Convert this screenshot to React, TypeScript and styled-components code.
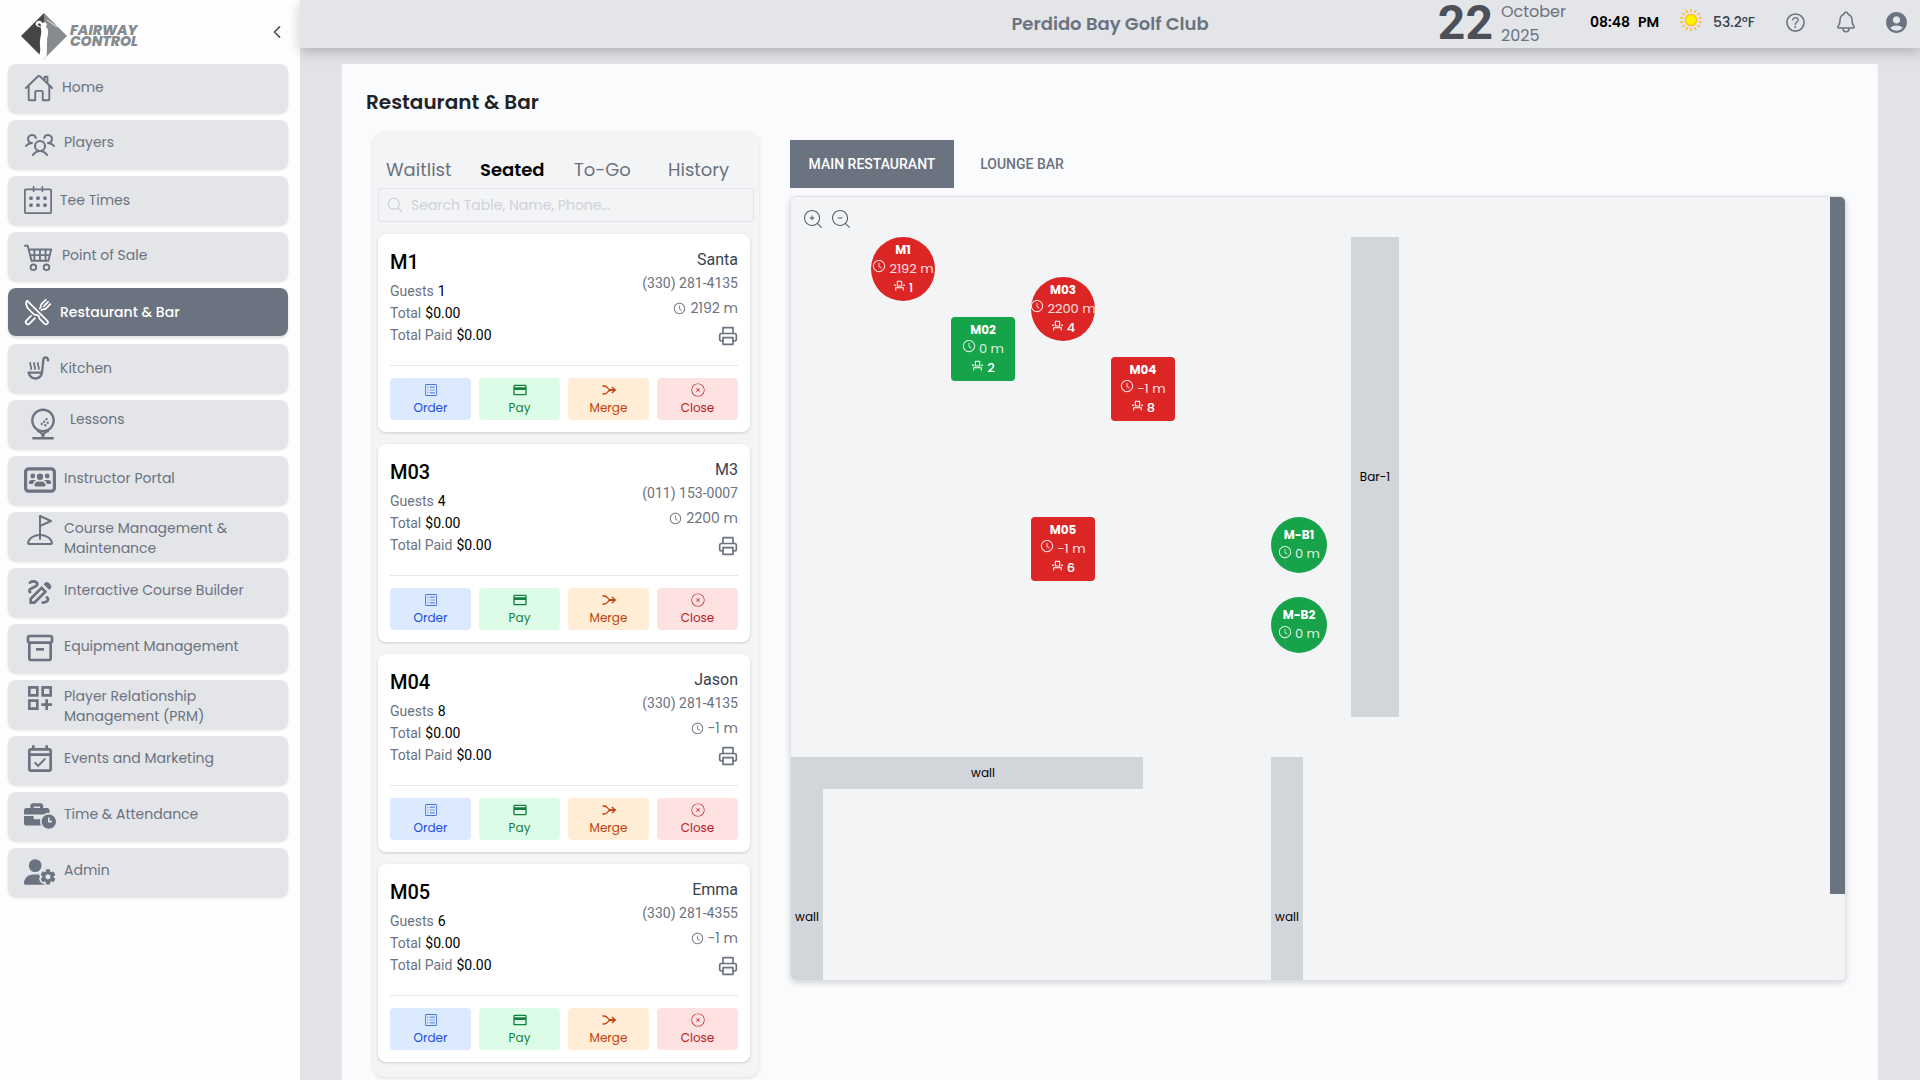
import React from "react";
import styled, { createGlobalStyle } from "styled-components";
import type { IconType } from "react-icons";
import {
  IoChevronBack,
  IoGolfOutline,
  IoHelpCircleOutline,
  IoHomeOutline,
  IoNotificationsOutline,
  IoRestaurantOutline,
  IoSearchOutline,
} from "react-icons/io5";
import { PiUsersThree } from "react-icons/pi";
import { SlCalender } from "react-icons/sl";
import { BsCart4 } from "react-icons/bs";
import {
  MdAccountCircle,
  MdOutlineDashboardCustomize,
  MdOutlineDraw,
  MdOutlineEventAvailable,
  MdOutlineEventSeat,
  MdOutlineInventory2,
  MdOutlineSoupKitchen,
  MdPayment,
} from "react-icons/md";
import { LiaGolfBallSolid } from "react-icons/lia";
import { FaUserGear, FaUsersRectangle } from "react-icons/fa6";
import { FaBusinessTime } from "react-icons/fa";
import { AiOutlineClockCircle } from "react-icons/ai";
import { CiCircleRemove, CiViewList, CiZoomIn, CiZoomOut } from "react-icons/ci";
import { FiPrinter } from "react-icons/fi";
import { TbArrowMerge } from "react-icons/tb";

const sans = `Poppins, Inter, "Open Sans", sans-serif`;
const roboto = `Roboto, "Open Sans", sans-serif`;
const slate = "#6b7280";

const GlobalStyle = createGlobalStyle`
  *, *::before, *::after { box-sizing: border-box; }
  body { margin: 0; font-family: ${sans}; background: #fff; color: #000; }
  button, input { font: inherit; }
  button { border: 0; padding: 0; background: none; color: inherit; cursor: pointer; }
  h1, h2, p, ul, dl, dd { margin: 0; padding: 0; }
  svg { display: block; flex-shrink: 0; }
`;

const Shell = styled.div`
  display: grid;
  grid-template-columns: 300px minmax(0, 1fr);
  height: 100vh;
  overflow: hidden;
`;

/* ---------- sidebar ---------- */

const Sidebar = styled.aside`
  background: #fefefe;
  padding: 0 12px 0 8px;
`;

const Brand = styled.div`
  display: flex;
  align-items: center;
  justify-content: space-between;
  height: 64px;
  padding: 8px 2px 0 12px;
`;

const Logo = styled.a`
  display: flex;
  align-items: center;
  gap: 2px;
  color: #868b8f;
  text-decoration: none;
`;

const LogoText = styled.span`
  display: flex;
  flex-direction: column;
  font-size: 14px;
  font-style: italic;
  font-weight: 800;
  line-height: 11px;
`;

const Collapse = styled.button`
  display: flex;
  color: #4b5563;
  padding: 0 0 8px;
`;

const NavList = styled.ul`
  display: flex;
  flex-direction: column;
  gap: 8px;
  list-style: none;
`;

const NavLink = styled.a<{ $active: boolean }>`
  display: flex;
  align-items: center;
  height: 48px;
  padding: 0 16px;
  border-radius: 8px;
  background: ${(p) => (p.$active ? slate : "#e4e5e9")};
  color: ${(p) => (p.$active ? "#fff" : slate)};
  font-weight: ${(p) => (p.$active ? 500 : 400)};
  box-shadow: 0 2px 3px rgba(0, 0, 0, 0.12);
  text-decoration: none;
`;

const NavRow = styled.span`
  display: flex;
  align-items: flex-start;
  gap: 8px;
`;

const NavText = styled.span`
  min-height: 28px;
  max-width: 190px;
  padding-top: 4px;
  font-size: 14px;
  line-height: 20px;
`;

/* ---------- header ---------- */

const Content = styled.div`
  display: flex;
  flex-direction: column;
  min-width: 0;
  background: #e2e3e7;
`;

const Header = styled.header`
  display: grid;
  grid-template-columns: 1fr auto 1fr;
  align-items: center;
  height: 48px;
  flex-shrink: 0;
  background: #e4e5e9;
  box-shadow: 0 4px 12px rgba(0, 0, 0, 0.22);
`;

const Club = styled.p`
  grid-column: 2;
  font-size: 18px;
  line-height: 28px;
  font-weight: 600;
  color: ${slate};
`;

const Status = styled.div`
  display: flex;
  align-items: flex-start;
  justify-content: flex-end;
  height: 48px;
  padding-right: 11px;
`;

const DateBox = styled.time`
  display: flex;
  gap: 8px;
  color: ${slate};
`;

const Day = styled.span`
  font-family: ${roboto};
  font-size: 48px;
  line-height: 46px;
  font-weight: 700;
  color: #4b5058;
`;

const Month = styled.span`
  display: flex;
  flex-direction: column;
  font-size: 16px;
  line-height: 24px;
`;

const Clock = styled.time`
  display: flex;
  gap: 8px;
  margin-left: 24px;
  font-size: 14px;
  line-height: 44px;
  font-weight: 600;
`;

const Weather = styled.span`
  display: flex;
  align-items: center;
  gap: 10px;
  height: 44px;
  margin: 0 28px 0 20px;
  font-size: 14px;
  font-weight: 500;
  color: #374151;
`;

const HeaderButtons = styled.div`
  display: flex;
  gap: 26px;
  height: 44px;
  color: ${slate};
`;

const IconButton = styled.button`
  display: flex;
  align-items: center;
  justify-content: center;
`;

/* ---------- page ---------- */

const Page = styled.main`
  flex: 1;
  min-height: 0;
  padding: 16px 42px 0;
  overflow: hidden;
`;

const Sheet = styled.div`
  position: relative;
  min-height: 100%;
  padding: 24px 24px 0;
  background: #fafbfd;
`;

const Title = styled.h1`
  margin-bottom: 16px;
  font-size: 20px;
  line-height: 28px;
  font-weight: 600;
  color: #1f2328;
`;

const Columns = styled.div`
  display: grid;
  grid-template-columns: 386px minmax(0, 1fr);
  align-items: start;
  gap: 31px;
  padding: 0 8px 0 7px;
`;

const Panel = styled.section`
  border-radius: 12px;
  background: #f3f4f6;
  box-shadow: 0 1px 4px rgba(0, 0, 0, 0.12);
  padding-bottom: 15px;
`;

const Tabs = styled.div`
  display: grid;
  grid-template-columns: repeat(4, 94px);
  padding: 24px 0 4px 13px;
  margin-right: -3px;
`;

const Tab = styled.button<{ $active: boolean }>`
  font-size: 18px;
  line-height: 28px;
  text-align: left;
  font-weight: ${(p) => (p.$active ? 600 : 400)};
  color: ${(p) => (p.$active ? "#000" : slate)};
`;

const Search = styled.label`
  display: flex;
  align-items: center;
  gap: 7px;
  height: 34px;
  margin: 0 5px 12px;
  padding: 0 8px 0 7px;
  border: 1px solid #e2e4e8;
  border-radius: 4px;
  color: #c9ccd1;
`;

const SearchInput = styled.input`
  flex: 1;
  min-width: 0;
  border: 0;
  outline: 0;
  padding: 0;
  background: transparent;
  font-size: 14px;
  color: #374151;
  &::placeholder { color: #cfd2d7; opacity: 1; }
`;

const TicketList = styled.div`
  display: flex;
  flex-direction: column;
  gap: 12px;
  padding: 0 9px 0 5px;
`;

const Ticket = styled.article`
  padding: 12px;
  border-radius: 8px;
  background: #fff;
  box-shadow: 0 1px 3px rgba(0, 0, 0, 0.16);
  font-family: ${roboto};
`;

const TicketInfo = styled.div`
  display: flex;
  justify-content: space-between;
  padding-bottom: 19px;
  border-bottom: 1px solid #e5e7eb;
`;

const TicketName = styled.h2`
  margin-bottom: 2px;
  font-size: 20px;
  line-height: 32px;
  font-weight: 500;
`;

const Fact = styled.div`
  display: flex;
  gap: 4px;
  font-size: 14px;
  line-height: 22px;
  dt { color: ${slate}; }
  dd { color: #000; }
`;

const Guest = styled.div`
  display: flex;
  flex-direction: column;
  align-items: flex-end;
  padding-top: 2px;
  font-size: 14px;
  line-height: 20px;
  color: ${slate};
`;

const GuestName = styled.span`
  padding-bottom: 1px;
  font-size: 16px;
  line-height: 24px;
  color: #374151;
`;

const Wait = styled.span`
  display: flex;
  align-items: center;
  gap: 4px;
  margin: 5px 0 8px;
  font-family: ${sans};
`;

const Actions = styled.div`
  display: grid;
  grid-template-columns: repeat(4, 1fr);
  gap: 8px;
  padding-top: 12px;
`;

const Action = styled.button<{ $bg: string; $fg: string; $turn?: boolean }>`
  display: flex;
  flex-direction: column;
  align-items: center;
  gap: 1px;
  height: 42px;
  padding-top: 4px;
  border-radius: 4px;
  background: ${(p) => p.$bg};
  color: ${(p) => p.$fg};
  font-family: ${sans};
  font-size: 12px;
  line-height: 18px;
  svg { transform: ${(p) => (p.$turn ? "rotate(90deg)" : "none")}; }
`;

/* ---------- floor plan ---------- */

const Floor = styled.section`
  padding-top: 8px;
`;

const RoomTabs = styled.div`
  display: flex;
  gap: 8px;
  margin-bottom: 8px;
`;

const RoomTab = styled.button<{ $active: boolean }>`
  height: 48px;
  padding: 0 16px;
  min-width: ${(p) => (p.$active ? "164px" : "120px")};
  background: ${(p) => (p.$active ? slate : "transparent")};
  color: ${(p) => (p.$active ? "#fff" : slate)};
  font-family: ${roboto};
  font-size: 14px;
  font-weight: 500;
`;

const Canvas = styled.div`
  position: relative;
  height: calc(100vh - 295px);
  overflow: hidden;
  border: 1px solid #e0e2e6;
  border-radius: 6px;
  background: #f3f4f6;
  box-shadow: 0 2px 6px rgba(0, 0, 0, 0.16);
`;

const ZoomBar = styled.div`
  display: flex;
  gap: 4px;
  padding: 10px;
  color: #4b5563;
`;

type Box = { $x: number; $y: number; $w: number; $h: number };

const Placed = styled.div<Box>`
  position: absolute;
  left: ${(p) => p.$x}px;
  top: ${(p) => p.$y}px;
  width: ${(p) => p.$w}px;
  height: ${(p) => p.$h}px;
  display: flex;
  align-items: center;
  justify-content: center;
  padding-bottom: 2px;
  font-size: 12px;
  line-height: 19px;
`;

const Fixture = styled(Placed)`
  background: #d2d6da;
  color: #000;
`;

const SideWall = styled.div`
  position: absolute;
  top: 0;
  right: 0;
  width: 15px;
  height: 697px;
  background: ${slate};
`;

const TableButton = styled(Placed).attrs({ as: "button" })<{ $round: boolean; $busy: boolean }>`
  flex-direction: column;
  border-radius: ${(p) => (p.$round ? "50%" : "4px")};
  background: ${(p) => (p.$busy ? "#dc2626" : "#16a34a")};
  color: #fff;
  white-space: nowrap;
`;

const TableName = styled.strong`
  font-weight: 700;
`;

const TableLine = styled.span<{ $dim?: boolean }>`
  display: flex;
  align-items: center;
  gap: 3px;
  font-size: 13px;
  font-weight: ${(p) => (p.$dim ? 400 : 500)};
  opacity: ${(p) => (p.$dim ? 0.85 : 1)};
  svg { margin-bottom: 4px; }
`;

/* ---------- data ---------- */

const nav: { label: string; Icon: IconType; size: number; active?: boolean }[] = [
  { label: "Home", Icon: IoHomeOutline, size: 30 },
  { label: "Players", Icon: PiUsersThree, size: 32 },
  { label: "Tee Times", Icon: SlCalender, size: 28 },
  { label: "Point of Sale", Icon: BsCart4, size: 30 },
  { label: "Restaurant & Bar", Icon: IoRestaurantOutline, size: 28, active: true },
  { label: "Kitchen", Icon: MdOutlineSoupKitchen, size: 28 },
  { label: "Lessons", Icon: LiaGolfBallSolid, size: 38 },
  { label: "Instructor Portal", Icon: FaUsersRectangle, size: 32 },
  { label: "Course Management & Maintenance", Icon: IoGolfOutline, size: 32 },
  { label: "Interactive Course Builder", Icon: MdOutlineDraw, size: 32 },
  { label: "Equipment Management", Icon: MdOutlineInventory2, size: 32 },
  { label: "Player Relationship Management (PRM)", Icon: MdOutlineDashboardCustomize, size: 32 },
  { label: "Events and Marketing", Icon: MdOutlineEventAvailable, size: 32 },
  { label: "Time & Attendance", Icon: FaBusinessTime, size: 32 },
  { label: "Admin", Icon: FaUserGear, size: 32 },
];

const tickets = [
  { table: "M1", guests: 1, name: "Santa", phone: "(330) 281-4135", wait: "2192 m" },
  { table: "M03", guests: 4, name: "M3", phone: "(011) 153-0007", wait: "2200 m" },
  { table: "M04", guests: 8, name: "Jason", phone: "(330) 281-4135", wait: "-1 m" },
  { table: "M05", guests: 6, name: "Emma", phone: "(330) 281-4355", wait: "-1 m" },
];

const actions = [
  { label: "Order", Icon: CiViewList, bg: "#dbeafe", fg: "#1d4ed8" },
  { label: "Pay", Icon: MdPayment, bg: "#dcfce7", fg: "#15803d" },
  { label: "Merge", Icon: TbArrowMerge, bg: "#ffedd5", fg: "#c2410c", turn: true },
  { label: "Close", Icon: CiCircleRemove, bg: "#fee2e2", fg: "#b91c1c" },
];

const tables = [
  { name: "M1", x: 80, y: 40, size: 64, round: true, busy: true, wait: "2192 m", seats: 1 },
  { name: "M02", x: 160, y: 120, size: 64, round: false, busy: false, wait: "0 m", seats: 2 },
  { name: "M03", x: 240, y: 80, size: 64, round: true, busy: true, wait: "2200 m", seats: 4 },
  { name: "M04", x: 320, y: 160, size: 64, round: false, busy: true, wait: "-1 m", seats: 8 },
  { name: "M05", x: 240, y: 320, size: 64, round: false, busy: true, wait: "-1 m", seats: 6 },
  { name: "M-B1", x: 480, y: 320, size: 56, round: true, busy: false, wait: "0 m" },
  { name: "M-B2", x: 480, y: 400, size: 56, round: true, busy: false, wait: "0 m" },
];

const fixtures = [
  { name: "Bar-1", x: 560, y: 40, w: 48, h: 480 },
  { name: "wall", x: 32, y: 560, w: 320, h: 32 },
  { name: "wall", x: 0, y: 560, w: 32, h: 320 },
  { name: "wall", x: 480, y: 560, w: 32, h: 320 },
];

/* ---------- drawings ---------- */

function LogoMark() {
  return (
    <svg width="48" height="48" viewBox="0 0 48 48" aria-hidden="true">
      <path d="M24 1 47 24 24 47Z" fill="#868b8f" />
      <path d="M24 1 1 24 24 47Z" fill="#444648" />
      <path
        d="M15.500 12.500c0-3 3-4.500 5.500-3.200l1.500 1.700c1.600-1.300 3.900-.6 4.200 1.200.2 1.200-.3 2-1 2.600 2 1.200 2.600 3.400 2.400 6.200-.1 2.300-.9 4.200-1 6.500-.2 4.600 0 11.500-.6 16.500l-2 2.400h-2.500l-.3-1-1.200-.5-1-2.500c.8-3 .9-6 .5-9-.5-4.500.4-8 1.100-11.500.3-2 .2-4.500-.5-6.500-1.800-.4-4.800-1.300-5.100-2.900Zm2.200.3c.8 1 2 1.500 3.300 1.600.1-.8 0-1.800-.8-2.600-1-.6-2.300-.1-2.500 1Z"
        fill="#fff"
      />
      <path d="m27 8 10 7" stroke="#fff" strokeWidth="0.8" />
    </svg>
  );
}

function Sun() {
  const rays = Array.from({ length: 14 }, (_, i) => (i * 360) / 14);
  return (
    <svg width="24" height="28" viewBox="0 0 24 28" aria-hidden="true">
      {rays.map((a) => (
        <path key={a} d="M12 1v3" stroke="#fcb827" strokeWidth="1.4" transform={`rotate(${a} 12 12)`} />
      ))}
      <circle cx="12" cy="12" r="5.600" fill="#fff200" stroke="#fdb813" strokeWidth="1.200" />
    </svg>
  );
}

/* ---------- app ---------- */

export default function App() {
  return (
    <>
      <GlobalStyle />
      <Shell>
        <Sidebar>
          <Brand>
            <Logo href="#home" aria-label="Fairway Control">
              <LogoMark />
              <LogoText>
                <span>FAIRWAY</span>
                <span>CONTROL</span>
              </LogoText>
            </Logo>
            <Collapse type="button" aria-label="Collapse menu">
              <IoChevronBack size={18} />
            </Collapse>
          </Brand>
          <nav>
            <NavList>
              {nav.map(({ label, Icon, size, active }) => (
                <li key={label}>
                  <NavLink href="#" $active={!!active}>
                    <NavRow>
                      <Icon size={size} />
                      <NavText>{label}</NavText>
                    </NavRow>
                  </NavLink>
                </li>
              ))}
            </NavList>
          </nav>
        </Sidebar>

        <Content>
          <Header>
            <Club>Perdido Bay Golf Club</Club>
            <Status>
              <DateBox>
                <Day>22</Day>
                <Month>
                  <span>October</span>
                  <span>2025</span>
                </Month>
              </DateBox>
              <Clock>
                <span>08:48</span>
                <span>PM</span>
              </Clock>
              <Weather>
                <Sun />
                53.2°F
              </Weather>
              <HeaderButtons>
                <IconButton type="button" aria-label="Help">
                  <IoHelpCircleOutline size={25} />
                </IconButton>
                <IconButton type="button" aria-label="Notifications">
                  <IoNotificationsOutline size={24} />
                </IconButton>
                <IconButton type="button" aria-label="Account">
                  <MdAccountCircle size={25} />
                </IconButton>
              </HeaderButtons>
            </Status>
          </Header>

          <Page>
            <Sheet>
              <Title>Restaurant &amp; Bar</Title>
              <Columns>
                <Panel>
                  <Tabs>
                    {["Waitlist", "Seated", "To-Go", "History"].map((t) => (
                      <Tab key={t} type="button" $active={t === "Seated"}>
                        {t}
                      </Tab>
                    ))}
                  </Tabs>
                  <Search>
                    <IoSearchOutline size={18} />
                    <SearchInput
                      type="text"
                      aria-label="Search tickets"
                      placeholder="Search Table, Name, Phone..."
                    />
                  </Search>
                  <TicketList>
                    {tickets.map((t) => (
                      <Ticket key={t.table}>
                        <TicketInfo>
                          <div>
                            <TicketName>{t.table}</TicketName>
                            <dl>
                              <Fact>
                                <dt>Guests</dt>
                                <dd>{t.guests}</dd>
                              </Fact>
                              <Fact>
                                <dt>Total</dt>
                                <dd>$0.00</dd>
                              </Fact>
                              <Fact>
                                <dt>Total Paid</dt>
                                <dd>$0.00</dd>
                              </Fact>
                            </dl>
                          </div>
                          <Guest>
                            <GuestName>{t.name}</GuestName>
                            <span>{t.phone}</span>
                            <Wait>
                              <AiOutlineClockCircle size={13} />
                              {t.wait}
                            </Wait>
                            <IconButton type="button" aria-label={`Print ${t.table}`}>
                              <FiPrinter size={20} />
                            </IconButton>
                          </Guest>
                        </TicketInfo>
                        <Actions>
                          {actions.map(({ label, Icon, bg, fg, turn }) => (
                            <Action key={label} type="button" $bg={bg} $fg={fg} $turn={turn}>
                              <Icon size={16} />
                              {label}
                            </Action>
                          ))}
                        </Actions>
                      </Ticket>
                    ))}
                  </TicketList>
                </Panel>

                <Floor>
                  <RoomTabs>
                    <RoomTab type="button" $active>
                      MAIN RESTAURANT
                    </RoomTab>
                    <RoomTab type="button" $active={false}>
                      LOUNGE BAR
                    </RoomTab>
                  </RoomTabs>
                  <Canvas>
                    <ZoomBar>
                      <IconButton type="button" aria-label="Zoom in">
                        <CiZoomIn size={24} />
                      </IconButton>
                      <IconButton type="button" aria-label="Zoom out">
                        <CiZoomOut size={24} />
                      </IconButton>
                    </ZoomBar>
                    {fixtures.map((f, i) => (
                      <Fixture key={i} $x={f.x} $y={f.y} $w={f.w} $h={f.h}>
                        {f.name}
                      </Fixture>
                    ))}
                    {tables.map((t) => (
                      <TableButton
                        key={t.name}
                        $x={t.x}
                        $y={t.y}
                        $w={t.size}
                        $h={t.size}
                        $round={t.round}
                        $busy={t.busy}
                      >
                        <TableName>{t.name}</TableName>
                        <TableLine $dim>
                          <AiOutlineClockCircle size={14} />
                          {t.wait}
                        </TableLine>
                        {t.seats && (
                          <TableLine>
                            <MdOutlineEventSeat size={13} />
                            {t.seats}
                          </TableLine>
                        )}
                      </TableButton>
                    ))}
                    <SideWall />
                  </Canvas>
                </Floor>
              </Columns>
            </Sheet>
          </Page>
        </Content>
      </Shell>
    </>
  );
}
